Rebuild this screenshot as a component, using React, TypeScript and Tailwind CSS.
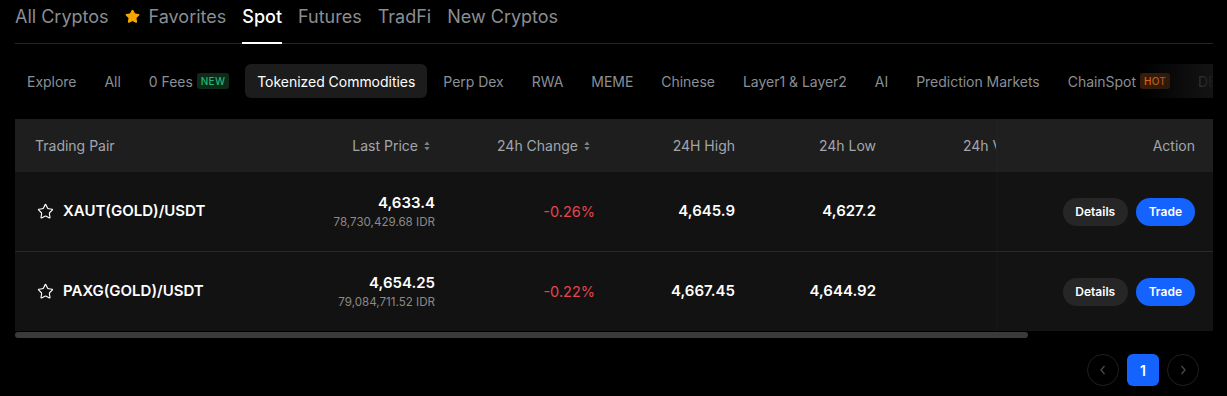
import { Star } from "lucide-react"

const topTabs = ["All Cryptos", "Favorites", "Spot", "Futures", "TradFi", "New Cryptos"]

const subTabs: { label: string; badge?: "NEW" | "HOT" }[] = [
  { label: "Explore" },
  { label: "All" },
  { label: "0 Fees", badge: "NEW" },
  { label: "Tokenized Commodities" },
  { label: "Perp Dex" },
  { label: "RWA" },
  { label: "MEME" },
  { label: "Chinese" },
  { label: "Layer1 & Layer2" },
  { label: "AI" },
  { label: "Prediction Markets" },
  { label: "ChainSpot", badge: "HOT" },
  { label: "DEX" },
]

const rows = [
  { pair: "XAUT(GOLD)/USDT", price: "4,633.4", idr: "78,730,429.68 IDR", change: "-0.26%", high: "4,645.9", low: "4,627.2" },
  { pair: "PAXG(GOLD)/USDT", price: "4,654.25", idr: "79,084,711.52 IDR", change: "-0.22%", high: "4,667.45", low: "4,644.92" },
]

function SortIcon() {
  return (
    <svg width="6" height="10" viewBox="0 0 6 10" className="ml-[6px] mr-[5px]">
      <path d="M3 0.5L5.6 4H0.4Z" fill="#7d8187" />
      <path d="M3 9.5L5.6 6H0.4Z" fill="#7d8187" />
    </svg>
  )
}

export default function App() {
  return (
    <div className="min-h-[396px] bg-black font-['Inter',sans-serif] text-white">
      <div className="ml-[15px] w-[1198px]">
        {/* top tabs */}
        <div className="flex h-[44px] gap-4 border-b border-[#262626]">
          {topTabs.map((t) => {
            const active = t === "Spot"
            return (
              <div
                key={t}
                className={`-mb-px flex items-start border-b-2 pt-1 pb-3 text-[18px] leading-[26px] ${
                  active ? "border-white font-medium text-white" : "border-transparent text-[#8a8d92]"
                }`}
              >
                {t === "Favorites" && <Star className="mr-[9px] mt-[5px] h-[15px] w-[15px] fill-[#f7a600] text-[#f7a600]" />}
                {t}
              </div>
            )
          })}
        </div>

        {/* sub tabs */}
        <div className="relative mt-5 flex h-[34px] gap-1 overflow-hidden tracking-[-0.03px]">
          {subTabs.map((s) => {
            const active = s.label === "Tokenized Commodities"
            return (
              <div
                key={s.label}
                className={`flex h-[34px] shrink-0 items-center rounded-md px-3 text-[14px] ${
                  active ? "bg-[#1c1c1c] text-white" : "text-[#8a8f96]"
                }`}
              >
                {s.label}
                {s.badge === "NEW" && (
                  <span className="ml-1 flex h-4 items-center rounded-[3px] bg-[#0d2a1b] px-1 text-[10px] font-medium tracking-wide text-[#1fb86a]">
                    NEW
                  </span>
                )}
                {s.badge === "HOT" && (
                  <span className="ml-1 flex h-4 items-center rounded-[3px] bg-[#3a1d08] px-1 text-[10px] font-medium tracking-wide text-[#f06e14]">
                    HOT
                  </span>
                )}
              </div>
            )
          })}
          <div className="absolute right-0 top-0 h-[34px] w-[75px] bg-gradient-to-r from-transparent to-[#151515]/95" />
        </div>

        {/* table */}
        <div className="mt-[21px] overflow-hidden">
          <div className="flex h-[53px] bg-[#1e1e1e] text-[14px] text-[#a2a6ac]">
            <div className="flex flex-1 items-center overflow-hidden">
              <div className="w-[285px] shrink-0 pl-5">Trading Pair</div>
              <div className="flex w-[135px] shrink-0 items-center justify-end">
                Last Price
                <SortIcon />
              </div>
              <div className="flex w-[160px] shrink-0 items-center justify-end">
                24h Change
                <SortIcon />
              </div>
              <div className="w-[140px] shrink-0 text-right">24H High</div>
              <div className="w-[141px] shrink-0 text-right">24h Low</div>
              <div className="shrink-0 whitespace-nowrap pl-[87px]">24h Volume</div>
            </div>
            <div className="flex w-[217px] shrink-0 items-center justify-end border-l border-[#222222] bg-[#1f1f1f] pr-[18px]">
              Action
            </div>
          </div>

          {rows.map((r, i) => (
            <div key={r.pair} className={`flex bg-[#121212] ${i === 0 ? "h-[80px] border-b border-[#2a2a2a]" : "h-[79px]"}`}>
              <div className="flex flex-1 items-center overflow-hidden">
                <div className="flex w-[285px] shrink-0 items-center pl-[22px]">
                  <Star className="h-[17px] w-[17px] text-white" strokeWidth={1.6} />
                  <span className="ml-[9px] text-[15px] font-semibold">{r.pair}</span>
                </div>
                <div className="flex w-[135px] shrink-0 flex-col items-end">
                  <span className="text-[15px] font-semibold leading-5">{r.price}</span>
                  <span className="mt-[1px] text-[11.6px] leading-4 text-[#8a8a8a]">{r.idr}</span>
                </div>
                <div className="w-[160px] shrink-0 text-right text-[14.5px] text-[#e5454f]">{r.change}</div>
                <div className="w-[140px] shrink-0 text-right text-[15px] font-semibold">{r.high}</div>
                <div className="w-[141px] shrink-0 text-right text-[15px] font-semibold">{r.low}</div>
              </div>
              <div className="flex w-[217px] shrink-0 items-center justify-end gap-2 border-l border-[#171717] bg-[#131313] pr-[18px]">
                <button className="h-7 rounded-full bg-[#262626] px-[12.5px] text-[12px] font-semibold text-white">Details</button>
                <button className="h-7 rounded-full bg-[#1463ff] px-[13px] text-[12px] font-semibold text-white">Trade</button>
              </div>
            </div>
          ))}
        </div>

        {/* fake horizontal scrollbar */}
        <div className="mt-px h-[6px] w-[1013px] rounded-full bg-[#3a3a3a]" />

        {/* pagination */}
        <div className="mt-4 flex justify-end gap-2 pr-[14px]">
          <div className="flex h-8 w-8 items-center justify-center rounded-full border border-[#1f1f1f]">
            <svg width="8" height="12" viewBox="0 0 8 12">
              <path d="M5.5 2L2 6l3.5 4" fill="none" stroke="#4a4a4a" strokeWidth="1.3" />
            </svg>
          </div>
          <div className="flex h-8 w-8 items-center justify-center rounded-md bg-[#1463ff] text-[14px] font-semibold">1</div>
          <div className="flex h-8 w-8 items-center justify-center rounded-full border border-[#1f1f1f]">
            <svg width="8" height="12" viewBox="0 0 8 12">
              <path d="M2.5 2L6 6l-3.5 4" fill="none" stroke="#4a4a4a" strokeWidth="1.3" />
            </svg>
          </div>
        </div>
      </div>
    </div>
  )
}
